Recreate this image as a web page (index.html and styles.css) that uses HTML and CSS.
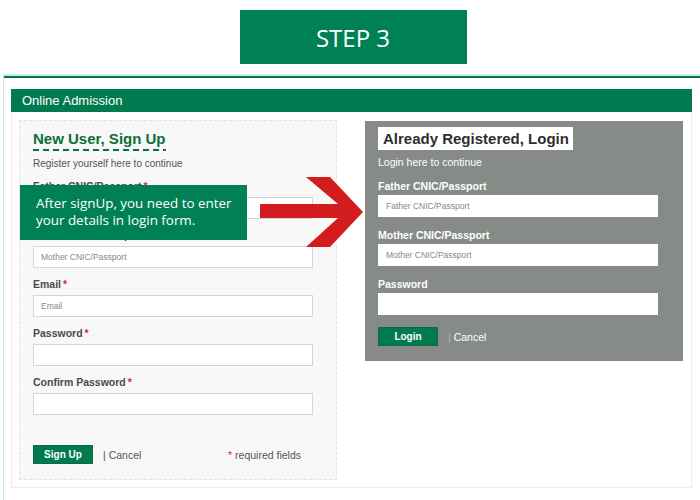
FILE: index.html
```html
<!DOCTYPE html>
<html>
<head>
<meta charset="utf-8">
<link rel="stylesheet" href="styles.css">
</head>
<body>
<div class="step-wrap"><div class="step">STEP 3</div></div>
<div class="page">
  <div class="page-inner">
    <div class="bar">Online Admission</div>
    <div class="content">
      <div class="panel signup">
        <div class="h-wrap"><h2 class="title-green">New User, Sign Up</h2></div>
        <p class="sub">Register yourself here to continue</p>
        <div class="field"><label>Father CNIC/Passport<span class="req">*</span></label><input class="inp" placeholder="Father CNIC/Passport"></div>
        <div class="field"><label>Mother CNIC/Passport<span class="req">*</span></label><input class="inp" placeholder="Mother CNIC/Passport"></div>
        <div class="field"><label>Email<span class="req">*</span></label><input class="inp" placeholder="Email"></div>
        <div class="field"><label>Password<span class="req">*</span></label><input class="inp" type="password"></div>
        <div class="field"><label>Confirm Password<span class="req">*</span></label><input class="inp" type="password"></div>
        <div class="actions">
          <button class="btn">Sign Up</button>
          <span class="cancel">| Cancel</span>
          <span class="required"><span class="req">*</span> required fields</span>
        </div>
      </div>
      <div class="panel login">
        <div><h2 class="title-box">Already Registered, Login</h2></div>
        <p class="sub">Login here to continue</p>
        <div class="field"><label>Father CNIC/Passport</label><input class="inp" placeholder="Father CNIC/Passport"></div>
        <div class="field"><label>Mother CNIC/Passport</label><input class="inp" placeholder="Mother CNIC/Passport"></div>
        <div class="field"><label>Password</label><input class="inp" type="password"></div>
        <div class="actions">
          <button class="btn">Login</button>
          <span class="cancel"><span class="pipe">|</span> Cancel</span>
        </div>
      </div>
    </div>
  </div>
</div>
<div class="tip">After signUp, you need to enter your details in login form.</div>
<svg class="arrow" width="104" height="72" viewBox="0 0 104 72">
  <polygon fill="#d21c1e" points="0,27 78,27 46,0 70,0 103,35 70,70 46,70 78,41 0,41"/>
</svg>
</body>
</html>
```
FILE: styles.css
```css
* { box-sizing: border-box; }
body {
  margin: 0;
  background: #fff;
  font-family: "Liberation Sans", Arial, sans-serif;
  position: relative;
  width: 700px;
  height: 500px;
  overflow: hidden;
}
.step-wrap {
  display: flex;
  justify-content: center;
  padding-top: 10px;
  padding-left: 6px;
}
.step {
  width: 227px;
  height: 54px;
  background: #008055;
  color: #fff;
  font-family: "Open Sans", sans-serif;
  font-size: 24px;
  display: flex;
  align-items: center;
  justify-content: center;
}
.page {
  margin-top: 10px;
  margin-left: 3px;
  border-top: 2px solid #c4efde;
  border-left: 1px solid #c4efde;
  height: 430px;
}
.page-inner {
  border-top: 2px solid #0b7148;
  padding: 11px 8px 0 7px;
}
.bar {
  height: 23px;
  background: #007a4e;
  color: #fff;
  font-size: 13px;
  line-height: 24px;
  padding-left: 11px;
}
.content {
  display: flex;
  gap: 28px;
  align-items: flex-start;
  padding: 8px 8px 8px 7px;
  border: 1px solid #ececec;
  border-top: none;
  height: 376px;
}
.panel {
  width: 319px;
}
.signup {
  background: #f8f8f8;
  border: 1px dashed #e2e2e2;
  height: 360px;
  padding: 7px 0 0 13px;
}
.login {
  background: #868b88;
  height: 240px;
  margin-top: 1px;
  padding: 6px 0 0 13px;
}
h2 { margin: 0; }
.h-wrap { display: inline-block; }
.title-green {
  color: #0d6e3c;
  font-size: 15px;
  font-weight: bold;
  line-height: 20px;
  padding-top: 1px;
  padding-bottom: 2px;
  background-image: repeating-linear-gradient(to right, #0d6e3c 0 6px, transparent 6px 10px);
  background-size: 100% 2px;
  background-position: bottom left;
  background-repeat: no-repeat;
}
.title-box {
  display: inline-block;
  background: #fff;
  color: #2e2e2e;
  font-size: 15px;
  font-weight: bold;
  height: 23px;
  line-height: 23px;
  padding: 0 4px 0 5px;
}
.sub {
  margin: 6px 0 0;
  font-size: 10px;
  line-height: 13px;
  color: #555;
}
.login .sub { color: #fff; margin-top: 6px; font-size: 10.5px; }
.field {
  display: flex;
  flex-direction: column;
}
.signup .field { margin-top: 10px; }
.signup .field + .field { margin-top: 10px; }
.login .field { margin-top: 11px; }
.login .field + .field { margin-top: 12px; }
label {
  font-size: 10.5px;
  font-weight: bold;
  line-height: 13px;
  color: #4a4a4a;
  margin-bottom: 4px;
}
.login label { color: #fff; margin-bottom: 2px; }
.req { color: #e4222b; margin-left: 2px; }
.inp {
  width: 280px;
  height: 22px;
  border: 1px solid #d5d5d5;
  background: #fff;
  font-family: "Liberation Sans", Arial, sans-serif;
  font-size: 8.5px;
  padding: 0 7px;
  outline: none;
}
.login .inp { border-color: #fff; }
.inp::placeholder { color: #888; }
.actions {
  display: flex;
  align-items: center;
  width: 280px;
}
.signup .actions { margin-top: 30px; }
.login .actions { margin-top: 12px; }
.btn {
  width: 60px;
  height: 19px;
  background: #007a4e;
  color: #fff;
  border: 1px solid #0c6a44;
  font-family: "Liberation Sans", Arial, sans-serif;
  font-size: 10px;
  font-weight: bold;
  padding: 0;
}
.cancel {
  margin-left: 10px;
  font-size: 10.5px;
  color: #555;
}
.login .cancel { color: #fff; }
.pipe { color: #b5b5b5; }
.required {
  margin-left: auto;
  font-size: 10.5px;
  color: #555;
  margin-right: 12px;
}
.required .req { margin: 0; }
.tip {
  position: absolute;
  left: 20px;
  top: 185px;
  width: 227px;
  height: 55px;
  background: #008055;
  color: #fff;
  font-family: "Open Sans", sans-serif;
  font-size: 13.4px;
  line-height: 17px;
  padding: 10px 8px 0 16px;
}
.arrow {
  position: absolute;
  left: 260px;
  top: 177px;
}
```
